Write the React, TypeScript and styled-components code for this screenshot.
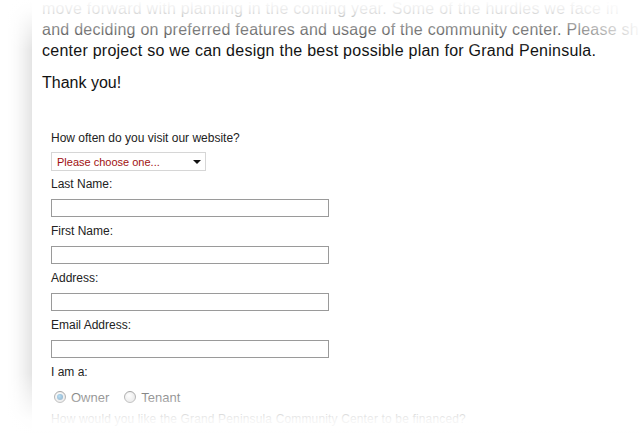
import React from "react";
import styled, { createGlobalStyle } from "styled-components";

const GlobalStyle = createGlobalStyle`
  html, body {
    margin: 0;
    padding: 0;
    background: #ffffff;
    overflow: hidden;
  }
  body {
    font-family: "Liberation Sans", Arial, sans-serif;
  }
`;

const Stage = styled.div`
  position: relative;
  width: 639px;
  height: 433px;
  overflow: hidden;
  background: #ffffff;
  padding-left: 32px;
  box-sizing: border-box;
`;

const Panel = styled.div`
  width: 720px;
  height: 100%;
  background: #ffffff;
  box-shadow: -6px 0 18px rgba(0, 0, 0, 0.14);
  padding-left: 10px;
  box-sizing: border-box;
`;

const Intro = styled.div`
  margin-top: -2px;
  font-size: 16px;
  line-height: 21px;
  letter-spacing: 0.25px;
  color: #111111;
`;

const Line = styled.div<{ $spacing: number }>`
  white-space: nowrap;
  word-spacing: ${(p) => p.$spacing}px;
`;

const Thanks = styled.p`
  margin: 11px 0 0;
  font-size: 16px;
  line-height: 21px;
  color: #111111;
`;

const Form = styled.form`
  margin-top: 38px;
  padding-left: 9px;
  font-size: 12px;
  color: #222222;
`;

const Label = styled.div<{ $gap?: number }>`
  line-height: 14px;
  margin-bottom: ${(p) => p.$gap ?? 8}px;
`;

const Field = styled.div`
  margin-bottom: 7px;
`;

const SelectBox = styled.div`
  width: 155px;
  height: 19px;
  box-sizing: border-box;
  border: 1px solid #d6d6d6;
  display: flex;
  align-items: center;
  justify-content: space-between;
  padding: 0 4px 0 5px;
  margin-bottom: 6px;
  font-size: 11px;
  color: #a01010;
  background: #ffffff;
`;

const Arrow = styled.span`
  width: 0;
  height: 0;
  border-left: 4px solid transparent;
  border-right: 4px solid transparent;
  border-top: 4px solid #111111;
  margin-top: 1px;
`;

const TextInput = styled.input`
  display: block;
  width: 278px;
  height: 18px;
  box-sizing: border-box;
  margin: 0;
  border: 1px solid #9a9a9a;
  padding: 0 3px;
  font-family: inherit;
  font-size: 12px;
  background: #ffffff;
  outline: none;
`;

const RadioRow = styled.div`
  display: flex;
  align-items: center;
  padding-left: 3px;
  height: 20px;
  margin-top: 8px;
  font-size: 13px;
  color: #333333;
`;

const RadioOption = styled.label`
  display: flex;
  align-items: center;
  gap: 5px;
  margin-right: 15px;
`;

const RadioDot = styled.span<{ $checked?: boolean }>`
  width: 12px;
  height: 12px;
  border-radius: 50%;
  box-sizing: border-box;
  border: 1px solid #707070;
  background: radial-gradient(circle at 40% 35%, #ffffff, #c8c8c8);
  display: flex;
  align-items: center;
  justify-content: center;
  &::after {
    content: "";
    display: ${(p) => (p.$checked ? "block" : "none")};
    width: 6px;
    height: 6px;
    border-radius: 50%;
    background: radial-gradient(circle at 40% 35%, #7cc4ec, #14578c);
  }
`;

const Question = styled.div`
  margin-top: 5px;
  font-size: 12px;
  line-height: 14px;
  letter-spacing: 0.15px;
  color: #333333;
  white-space: nowrap;
`;

const TopFade = styled.div`
  position: absolute;
  left: 0;
  top: 0;
  width: 100%;
  height: 50px;
  background: linear-gradient(
    to bottom,
    rgba(255, 255, 255, 1) 0%,
    rgba(255, 255, 255, 0.9) 22%,
    rgba(255, 255, 255, 0) 100%
  );
  pointer-events: none;
`;

const RightFade = styled.div`
  position: absolute;
  right: 0;
  top: 0;
  width: 70px;
  height: 42px;
  background: linear-gradient(to right, rgba(255, 255, 255, 0), rgba(255, 255, 255, 0.95));
  pointer-events: none;
`;

const BottomFade = styled.div`
  position: absolute;
  left: 0;
  bottom: 0;
  width: 100%;
  height: 60px;
  background: linear-gradient(
    to bottom,
    rgba(255, 255, 255, 0) 0%,
    rgba(255, 255, 255, 0.94) 78%,
    rgba(255, 255, 255, 0.98) 100%
  );
  pointer-events: none;
`;

const fields = ["Last Name:", "First Name:", "Address:", "Email Address:"];

export default function App() {
  return (
    <>
      <GlobalStyle />
      <Stage>
        <Panel>
          <Intro>
            <Line $spacing={0}>
              move forward with planning in the coming year. Some of the hurdles we face in
            </Line>
            <Line $spacing={0}>
              and deciding on preferred features and usage of the community center. Please share
            </Line>
            <Line $spacing={0}>
              center project so we can design the best possible plan for Grand Peninsula.
            </Line>
          </Intro>
          <Thanks>Thank you!</Thanks>
          <Form>
            <Label $gap={7}>How often do you visit our website?</Label>
            <SelectBox>
              <span>Please choose one...</span>
              <Arrow />
            </SelectBox>
            {fields.map((f) => (
              <Field key={f}>
                <Label>{f}</Label>
                <TextInput type="text" />
              </Field>
            ))}
            <Label $gap={0}>I am a:</Label>
            <RadioRow>
              <RadioOption>
                <RadioDot $checked />
                Owner
              </RadioOption>
              <RadioOption>
                <RadioDot />
                Tenant
              </RadioOption>
            </RadioRow>
            <Question>How would you like the Grand Peninsula Community Center to be financed?</Question>
          </Form>
        </Panel>
        <TopFade />
        <RightFade />
        <BottomFade />
      </Stage>
    </>
  );
}
